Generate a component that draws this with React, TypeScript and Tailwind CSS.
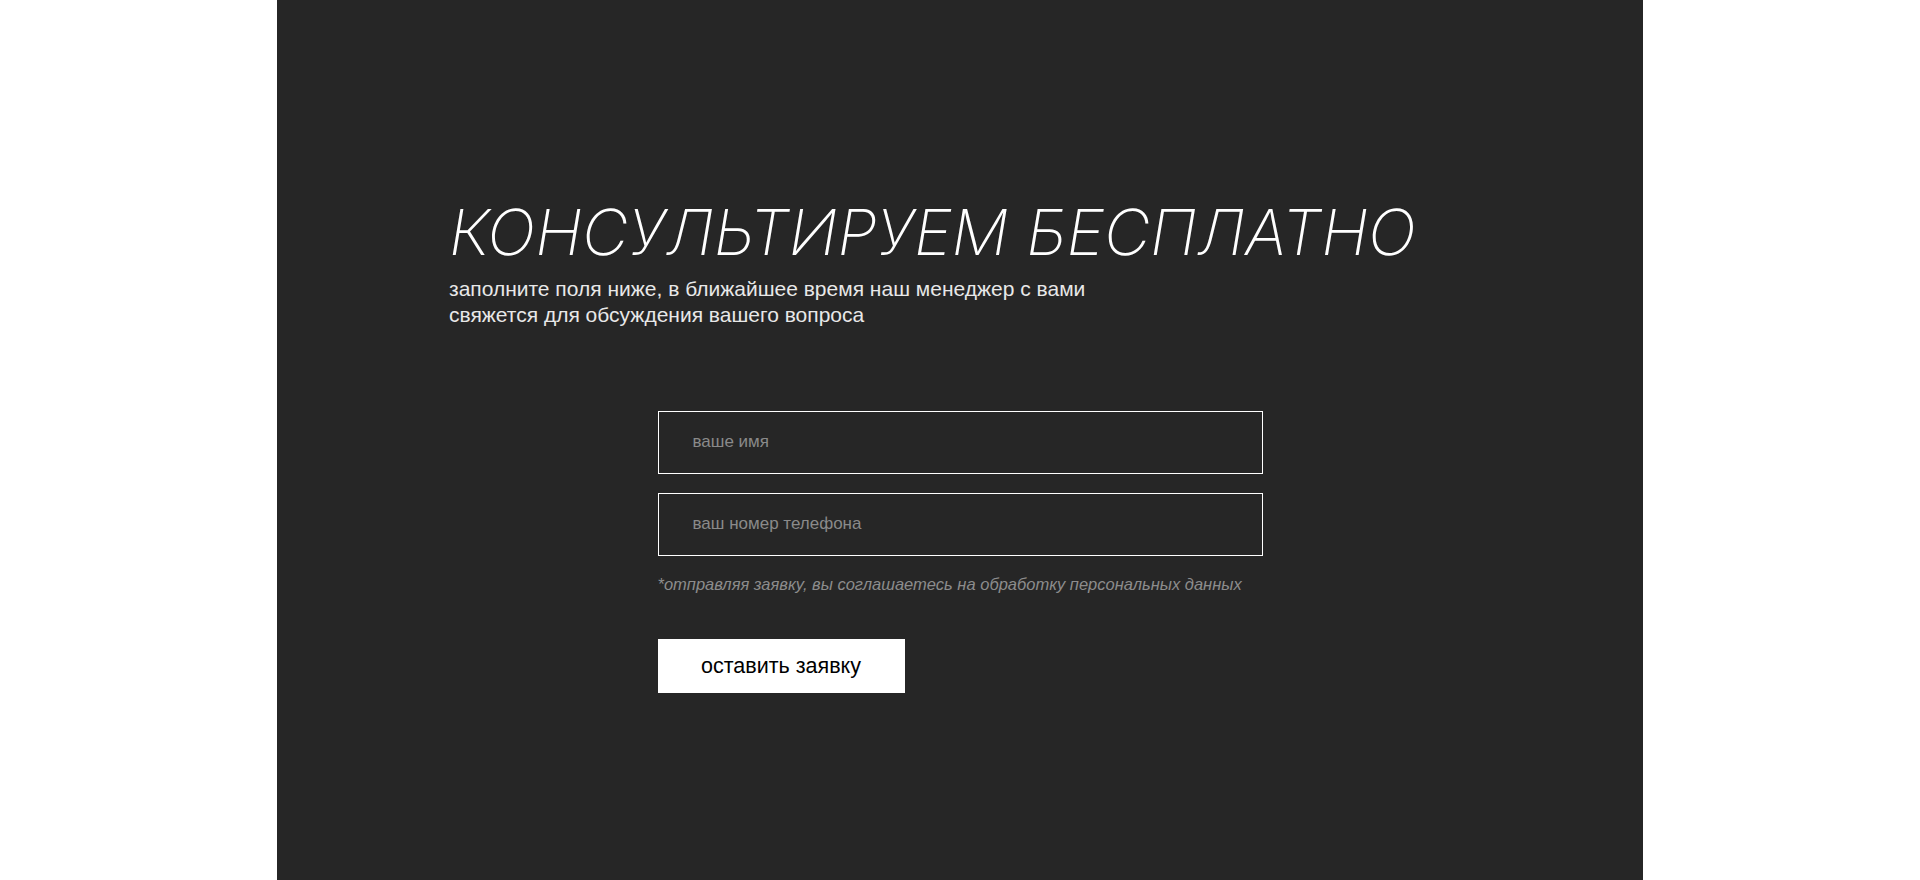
export default function App() {
  return (
    <div className="min-h-screen bg-white">
      <section className="mx-auto h-[880px] max-w-[1366px] bg-[#262626] pt-[200px] font-['Liberation_Sans',Arial,sans-serif]">
        {/* heading block */}
        <div className="pl-[172px]">
          <h2 className="font-['Inter',sans-serif] text-[63.5px] font-extralight italic leading-none text-white">
            КОНСУЛЬТИРУЕМ БЕСПЛАТНО
          </h2>
          <p className="mt-[12px] max-w-[680px] text-[21px] leading-[26px] text-[#e8e8e8]">
            заполните поля ниже, в ближайшее время наш менеджер с вами свяжется для обсуждения вашего вопроса
          </p>
        </div>

        {/* form */}
        <form className="mx-auto mt-[83px] flex w-[605px] flex-col">
          <input
            type="text"
            placeholder="ваше имя"
            className="h-[63px] w-full border border-white bg-transparent px-[34px] text-[17px] text-white outline-none placeholder:text-[#8a8a8a]"
          />
          <input
            type="tel"
            placeholder="ваш номер телефона"
            className="mt-[19px] h-[63px] w-full border border-white bg-transparent px-[34px] text-[17px] text-white outline-none placeholder:text-[#8a8a8a]"
          />
          <p className="mt-[16px] text-[16.5px] italic text-[#8c8c8c]">
            *отправляя заявку, вы соглашаетесь на обработку персональных данных
          </p>
          <button
            type="button"
            className="mt-[43px] h-[54px] w-[247px] bg-white text-[21.5px] text-black"
          >
            оставить заявку
          </button>
        </form>
      </section>
    </div>
  );
}
